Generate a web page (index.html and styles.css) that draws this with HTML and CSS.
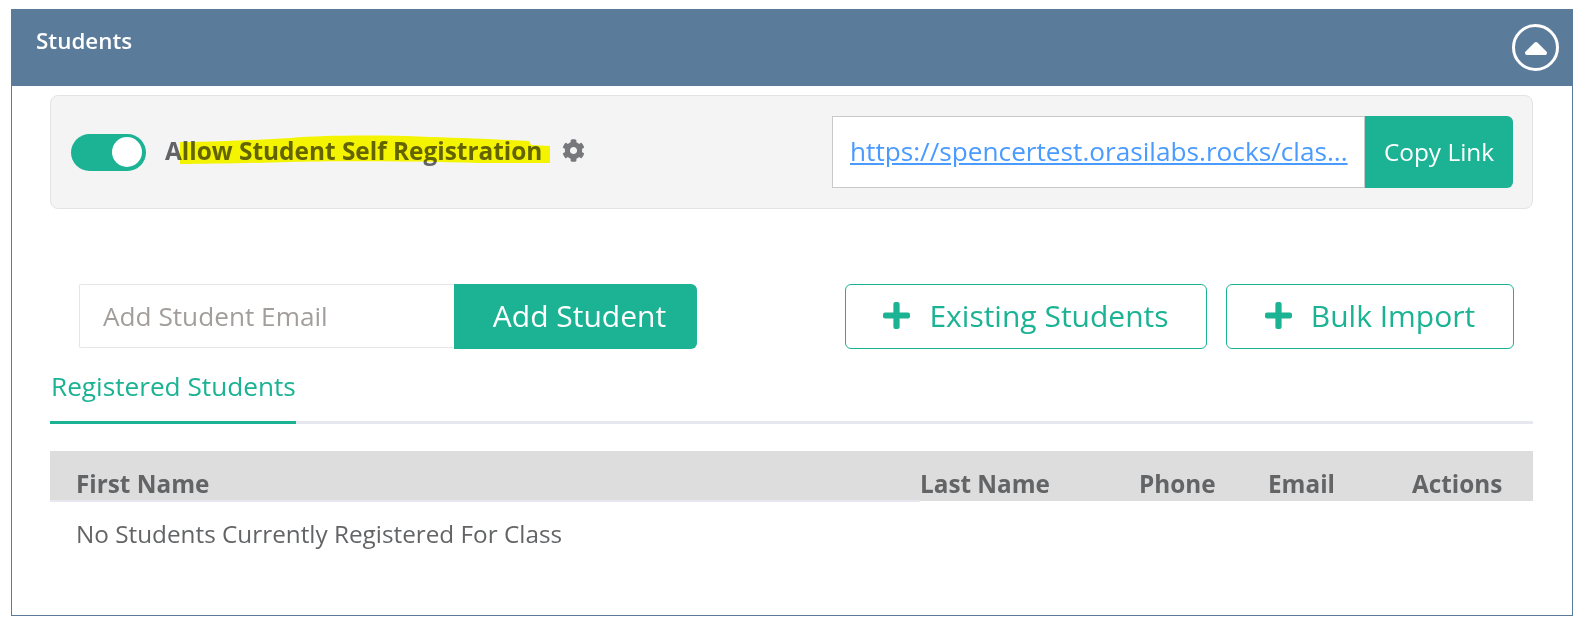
FILE: index.html
```html
<!DOCTYPE html>
<html lang="en">
<head>
    <meta charset="UTF-8">
    <title>Students</title>
    <link rel="stylesheet" href="styles.css">
</head>
<body>
    <section class="panel">
        <header class="panel-header">
            <h2>Students</h2>
            <button type="button" class="collapse-btn" aria-label="Collapse">
                <svg viewBox="0 0 24 14" width="24" height="14"><path d="M3 12 12 3l9 9z" fill="#fff" stroke="#fff" stroke-width="4" stroke-linejoin="round"/></svg>
            </button>
        </header>
        <div class="panel-body">
            <div class="self-reg">
                <div class="self-reg-left">
                    <span class="toggle"><span class="knob"></span></span>
                    <label class="self-reg-label">Allow Student Self Registration</label>
                    <svg class="gear" viewBox="0 0 512 512"><path fill="#77787b" d="M487.4 315.7l-42.6-24.6c4.3-23.2 4.3-47 0-70.2l42.6-24.6c4.9-2.8 7.1-8.6 5.5-14-11.1-35.6-30-67.8-54.7-94.6-3.8-4.1-10-5.1-14.8-2.3L380.8 110c-17.9-15.4-38.5-27.3-60.8-35.1V25.8c0-5.6-3.9-10.5-9.4-11.7-36.7-8.2-74.3-7.8-109.2 0-5.5 1.2-9.4 6.1-9.4 11.7V75c-22.2 7.9-42.8 19.8-60.8 35.1L88.7 85.5c-4.9-2.8-11-1.9-14.8 2.3-24.7 26.7-43.6 58.9-54.7 94.6-1.7 5.4.6 11.2 5.5 14L67.3 221c-4.3 23.2-4.3 47 0 70.2l-42.6 24.6c-4.9 2.8-7.1 8.6-5.5 14 11.1 35.6 30 67.8 54.7 94.6 3.8 4.1 10 5.1 14.8 2.3l42.6-24.6c17.9 15.4 38.5 27.3 60.8 35.1v49.2c0 5.6 3.9 10.5 9.4 11.7 36.7 8.2 74.3 7.8 109.2 0 5.5-1.2 9.4-6.1 9.4-11.7v-49.2c22.2-7.9 42.8-19.8 60.8-35.1l42.6 24.6c4.9 2.8 11 1.9 14.8-2.3 24.7-26.7 43.6-58.9 54.7-94.6 1.5-5.5-.7-11.3-5.6-14.1zM256 336c-44.1 0-80-35.9-80-80s35.9-80 80-80 80 35.9 80 80-35.9 80-80 80z"/></svg>
                    <svg class="marker" viewBox="0 0 370 29" preserveAspectRatio="none"><path fill="#ffff00" d="M0 7C40 7 75 5 110 3 150 0 200 0 250 2 290 3 330 5 349 6L351 10 370 11V28H300C230 26 150 26 110 27 70 28 30 29 0 29z"/></svg>
                </div>
                <div class="copy-group">
                    <div class="link-box"><a href="#">https://spencertest.orasilabs.rocks/clas...</a></div>
                    <button type="button" class="btn-copy">Copy Link</button>
                </div>
            </div>

            <div class="add-row">
                <form class="add-form">
                    <input type="text" placeholder="Add Student Email">
                    <button type="button" class="btn-add">Add Student</button>
                </form>
                <div class="add-actions">
                    <button type="button" class="btn-outline btn-existing">
                        <svg class="plus" viewBox="0 0 26 26"><rect x="10" y="0" width="6" height="26" rx="2"/><rect x="0" y="10" width="26" height="6" rx="2"/></svg>
                        Existing Students
                    </button>
                    <button type="button" class="btn-outline btn-bulk">
                        <svg class="plus" viewBox="0 0 26 26"><rect x="10" y="0" width="6" height="26" rx="2"/><rect x="0" y="10" width="26" height="6" rx="2"/></svg>
                        Bulk Import
                    </button>
                </div>
            </div>

            <nav class="tabs">
                <a href="#" class="tab active">Registered Students</a>
            </nav>

            <table class="students">
                <thead>
                    <tr>
                        <th class="col-first">First Name</th>
                        <th class="col-last">Last Name</th>
                        <th class="col-phone">Phone</th>
                        <th class="col-email">Email</th>
                        <th class="col-actions">Actions</th>
                    </tr>
                </thead>
                <tbody>
                    <tr><td colspan="5">No Students Currently Registered For Class</td></tr>
                </tbody>
            </table>
        </div>
    </section>
</body>
</html>
```

FILE: styles.css
```css
* {
    margin: 0;
    padding: 0;
    box-sizing: border-box;
}

body {
    font-family: "Open Sans", sans-serif;
    color: #636466;
    background-color: #fff;
    padding: 9px 22px 0 11px;
}

button {
    font-family: inherit;
    cursor: pointer;
}

/* Panel */
.panel {
    border: 1px solid #5b7b9b;
    height: 607px;
}

.panel-header {
    height: 77px;
    margin: -1px -1px 0;
    background-color: #5b7b9b;
    color: #fff;
    display: flex;
    justify-content: space-between;
    padding: 15px 14px 0 25px;
}

.panel-header h2 {
    font-size: 22.4px;
    font-weight: 600;
    line-height: 34px;
}

.collapse-btn {
    width: 47px;
    height: 47px;
    border: 3px solid #fff;
    border-radius: 50%;
    background: none;
    display: flex;
    align-items: center;
    justify-content: center;
}

.panel-body {
    padding: 9px 39px 0 38px;
}

/* Self registration */
.self-reg {
    height: 114px;
    background-color: #f4f4f4;
    border: 1px solid #e3e3e3;
    border-radius: 8px;
    display: flex;
    justify-content: space-between;
    align-items: center;
    padding: 0 19px 0 20px;
}

.self-reg-left {
    position: relative;
    display: flex;
    align-items: center;
}

.toggle {
    width: 75px;
    height: 37px;
    border-radius: 19px;
    background-color: #1bb394;
    display: flex;
    align-items: center;
    justify-content: flex-end;
    padding-right: 4px;
}

.knob {
    width: 30px;
    height: 30px;
    border-radius: 50%;
    background-color: #fff;
}

.self-reg-label {
    margin-left: 19px;
    margin-top: -4px;
    font-size: 24.4px;
    font-weight: 700;
}

.gear {
    width: 23px;
    height: 23px;
    margin-left: 20px;
    margin-top: -4px;
}

.marker {
    position: absolute;
    left: 109px;
    top: 1px;
    width: 370px;
    height: 29px;
    mix-blend-mode: multiply;
}

.copy-group {
    display: flex;
    height: 72px;
}

.link-box {
    width: 533px;
    background-color: #fff;
    border: 1px solid #c9c9c9;
    display: flex;
    align-items: center;
    padding: 0 0 2px 17px;
    font-size: 26.2px;
    white-space: nowrap;
}

.link-box a {
    color: #4a9bff;
}

.btn-copy {
    width: 148px;
    border: none;
    border-radius: 0 6px 6px 0;
    background-color: #1bb394;
    color: #fff;
    font-size: 24.4px;
    padding-bottom: 2px;
}

/* Add student row */
.add-row {
    display: flex;
    justify-content: space-between;
    margin-top: 75px;
    padding: 0 19px 0 29px;
}

.add-form {
    display: flex;
    height: 65px;
}

.add-form input {
    width: 375px;
    height: 64px;
    border: 1px solid #e5e6e7;
    border-right: none;
    border-radius: 2px 0 0 2px;
    padding: 0 23px;
    font-family: inherit;
    font-size: 26.2px;
    outline: none;
}

.add-form input::placeholder {
    color: #a39e9b;
}

.btn-add {
    width: 243px;
    border: none;
    border-radius: 0 6px 6px 0;
    background-color: #1bb394;
    color: #fff;
    font-size: 30px;
    padding: 0 0 2px 8px;
}

.add-actions {
    display: flex;
    gap: 19px;
}

.btn-outline {
    height: 65px;
    border: 1px solid #1bb394;
    border-radius: 6px;
    background-color: #fff;
    color: #1bb394;
    font-size: 30px;
    display: flex;
    align-items: center;
    justify-content: center;
    gap: 19px;
    padding-bottom: 2px;
}

.btn-existing {
    width: 362px;
}

.btn-bulk {
    width: 288px;
}

.plus {
    width: 27px;
    height: 27px;
    fill: #1bb394;
}

/* Tabs */
.tabs {
    display: flex;
    border-bottom: 3px solid #e7e7ef;
    margin-top: 16px;
}

.tab {
    width: 246px;
    height: 59px;
    margin-bottom: -3px;
    border-bottom: 3px solid #1bb394;
    color: #1bb394;
    font-size: 26.2px;
    line-height: 42px;
    padding-left: 1px;
    text-decoration: none;
}

/* Table */
.students {
    width: 100%;
    margin-top: 27px;
    border-collapse: collapse;
    table-layout: fixed;
}

.students th {
    height: 50px;
    background-color: #dddddd;
    font-size: 24.3px;
    font-weight: 700;
    text-align: left;
    vertical-align: bottom;
    padding-bottom: 1px;
    line-height: 32px;
}

.students th.col-first {
    width: 870px;
    padding-left: 26px;
    padding-bottom: 0;
    border-bottom: 2px solid #e7e7ef;
}

.col-last {
    width: 219px;
}

.col-phone {
    width: 129px;
}

.col-email {
    width: 144px;
}

.students td {
    padding: 16px 26px;
    font-size: 24.3px;
    line-height: 32px;
}
```
